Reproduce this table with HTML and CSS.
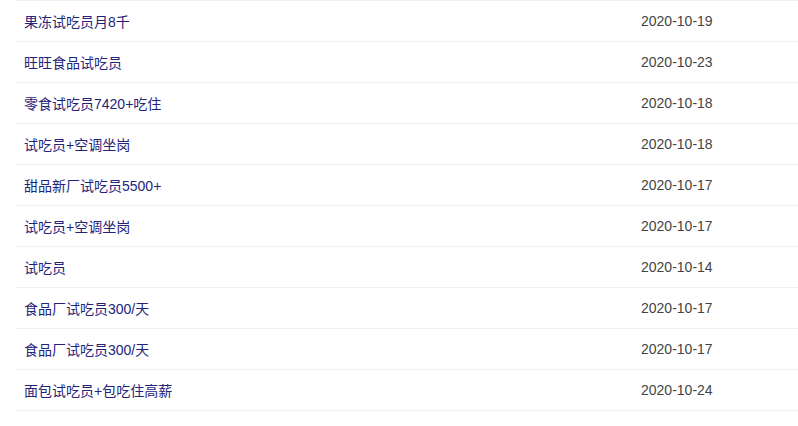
FILE: index.html
```html
<!DOCTYPE html>
<html lang="zh">
<head>
<meta charset="utf-8">
<link rel="stylesheet" href="styles.css">
</head>
<body>
<ul class="list">
  <li class="row"><span class="title">果冻试吃员月8千</span><span class="date">2020-10-19</span></li>
  <li class="row"><span class="title">旺旺食品试吃员</span><span class="date">2020-10-23</span></li>
  <li class="row"><span class="title">零食试吃员7420+吃住</span><span class="date">2020-10-18</span></li>
  <li class="row"><span class="title">试吃员+空调坐岗</span><span class="date">2020-10-18</span></li>
  <li class="row"><span class="title">甜品新厂试吃员5500+</span><span class="date">2020-10-17</span></li>
  <li class="row"><span class="title">试吃员+空调坐岗</span><span class="date">2020-10-17</span></li>
  <li class="row"><span class="title">试吃员</span><span class="date">2020-10-14</span></li>
  <li class="row"><span class="title">食品厂试吃员300/天</span><span class="date">2020-10-17</span></li>
  <li class="row"><span class="title">食品厂试吃员300/天</span><span class="date">2020-10-17</span></li>
  <li class="row"><span class="title">面包试吃员+包吃住高薪</span><span class="date">2020-10-24</span></li>
</ul>
</body>
</html>
```
FILE: styles.css
```css
html, body {
  margin: 0;
  padding: 0;
  background: #fff;
}
.list {
  list-style: none;
  margin: 0;
  padding: 0 0 0 16px;
  font-family: "Liberation Sans", "Noto Sans CJK SC", sans-serif;
  font-size: 14px;
}
.row {
  display: flex;
  align-items: center;
  height: 40px;
  border-bottom: 1px solid #f0f0f0;
}
.row:first-child {
  border-top: 1px solid #f0f0f0;
}
.title {
  flex: 1;
  padding-left: 8px;
  color: #23237a;
}
.date {
  width: 157px;
  color: #444;
}
```
